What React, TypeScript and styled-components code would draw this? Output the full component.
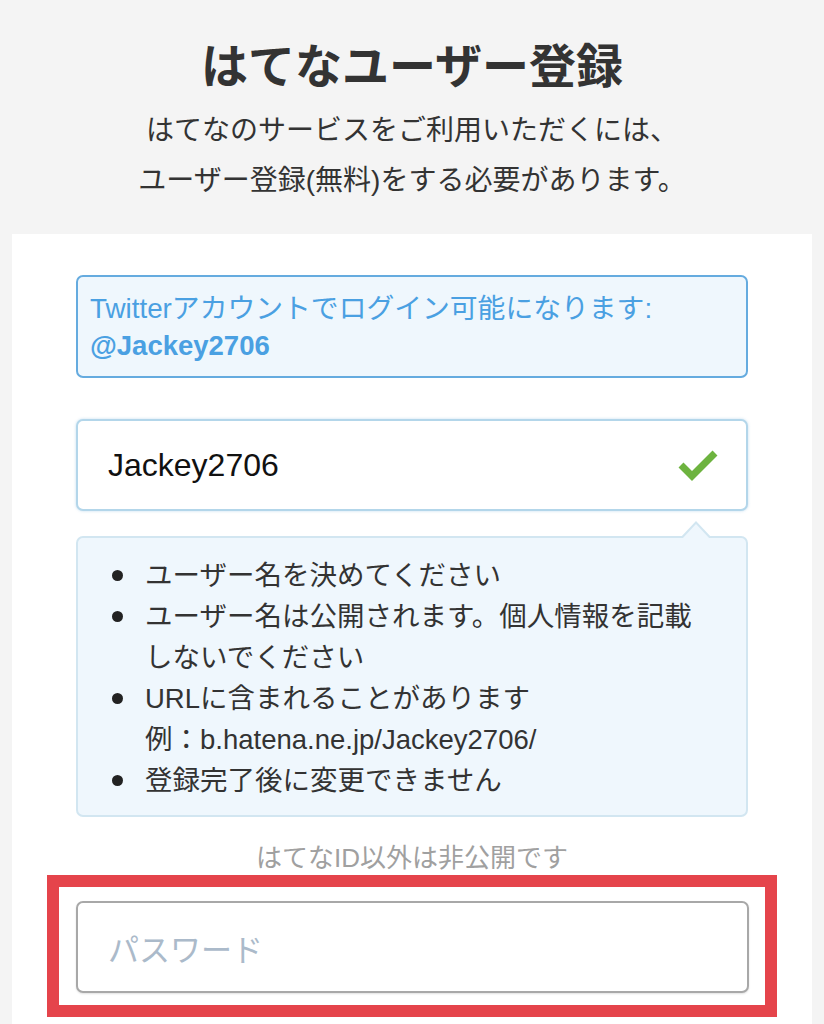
import React from "react";
import styled, { createGlobalStyle } from "styled-components";

const GlobalStyle = createGlobalStyle`
  html, body {
    margin: 0;
    padding: 0;
    background: #f4f4f4;
  }
  body {
    font-family: "Liberation Sans", "Noto Sans CJK JP", sans-serif;
    color: #333;
  }
  * { box-sizing: border-box; }
`;

const Page = styled.div`
  width: 824px;
  min-height: 1024px;
  overflow: hidden;
  display: flex;
  flex-direction: column;
`;

const Header = styled.header`
  display: flex;
  flex-direction: column;
  align-items: center;
  padding: 37px 0 28px;
`;

const Title = styled.h1`
  margin: 0;
  font-size: 47px;
  line-height: 60px;
  font-weight: 700;
  color: #333;
`;

const Lead = styled.p`
  margin: 9px 0 0;
  font-size: 28px;
  line-height: 50px;
  text-align: center;
  color: #333;
`;

const Card = styled.main`
  margin: 0 12px;
  background: #fff;
  padding: 41px 64px 8px;
  display: flex;
  flex-direction: column;
  flex: 1;
`;

const TwitterNotice = styled.div`
  border: 2px solid #65abdf;
  border-radius: 7px;
  background: #eff7fd;
  padding: 13px 12px 12px;
  color: #4aa0e2;
  font-size: 27.8px;
  line-height: 37px;
`;

const Handle = styled.strong`
  display: block;
  font-weight: 700;
  font-size: 27.5px;
`;

const Field = styled.div<{ $tone: "ok" | "plain" }>`
  height: 92px;
  border-radius: 7px;
  border: 2px solid ${(p) => (p.$tone === "ok" ? "#b3d6ea" : "#a8a8a8")};
  box-shadow: ${(p) =>
    p.$tone === "ok" ? "0 0 3px rgba(120, 180, 220, 0.45)" : "0 1px 2px rgba(0,0,0,0.12)"};
  background: #fff;
  display: flex;
  align-items: center;
  justify-content: space-between;
  padding: 0 28px 0 30px;
`;

const FieldText = styled.span<{ $placeholder?: boolean }>`
  font-size: ${(p) => (p.$placeholder ? "31px" : "32px")};
  color: ${(p) => (p.$placeholder ? "#abbaca" : "#111")};
`;

const UserField = styled(Field)`
  margin-top: 41px;
`;

const Hint = styled.div`
  position: relative;
  margin-top: 25px;
  background: #eff7fd;
  border: 2px solid #d2e6f1;
  border-radius: 7px;
  padding: 17px 30px 14px 35px;

  &::before,
  &::after {
    content: "";
    position: absolute;
    width: 0;
    height: 0;
    border-style: solid;
  }
  &::before {
    right: 34px;
    top: -17px;
    border-width: 0 16px 17px 16px;
    border-color: transparent transparent #d2e6f1 transparent;
  }
  &::after {
    right: 36px;
    top: -14px;
    border-width: 0 14px 15px 14px;
    border-color: transparent transparent #eff7fd transparent;
  }
`;

const HintList = styled.ul`
  list-style: none;
  margin: 0;
  padding: 0;
`;

const HintItem = styled.li`
  display: grid;
  grid-template-columns: 32px 1fr;
  font-size: 27.5px;
  line-height: 41px;
  color: #333;

  &::before {
    content: "";
    width: 11px;
    height: 11px;
    border-radius: 50%;
    background: #222;
    margin-top: 15px;
    margin-left: -1px;
  }
`;

const Caption = styled.p`
  margin: 26px 0 0;
  text-align: center;
  font-size: 26px;
  line-height: 30px;
  color: #a0a0a0;
`;

const Highlight = styled.div`
  margin: 2px -29px 0;
  border: 12px solid #e5444b;
  padding: 14px 16px 12px 17px;
  background: #fff;
`;

const Check = () => (
  <svg width="40" height="34" viewBox="0 0 40 34" aria-hidden="true">
    <polyline
      points="3,17 14,28 37,5"
      fill="none"
      stroke="#6db33f"
      strokeWidth="7"
      strokeLinejoin="miter"
    />
  </svg>
);

export default function App() {
  return (
    <>
      <GlobalStyle />
      <Page>
        <Header>
          <Title>はてなユーザー登録</Title>
          <Lead>
            はてなのサービスをご利用いただくには、
            <br />
            ユーザー登録(無料)をする必要があります。
          </Lead>
        </Header>
        <Card>
          <TwitterNotice>
            Twitterアカウントでログイン可能になります:
            <Handle>@Jackey2706</Handle>
          </TwitterNotice>
          <UserField $tone="ok">
            <FieldText>Jackey2706</FieldText>
            <Check />
          </UserField>
          <Hint>
            <HintList>
              <HintItem>
                <span>ユーザー名を決めてください</span>
              </HintItem>
              <HintItem>
                <span>ユーザー名は公開されます。個人情報を記載しないでください</span>
              </HintItem>
              <HintItem>
                <span>
                  URLに含まれることがあります
                  <br />
                  例：b.hatena.ne.jp/Jackey2706/
                </span>
              </HintItem>
              <HintItem>
                <span>登録完了後に変更できません</span>
              </HintItem>
            </HintList>
          </Hint>
          <Caption>はてなID以外は非公開です</Caption>
          <Highlight>
            <Field $tone="plain">
              <FieldText $placeholder>パスワード</FieldText>
            </Field>
          </Highlight>
        </Card>
      </Page>
    </>
  );
}
